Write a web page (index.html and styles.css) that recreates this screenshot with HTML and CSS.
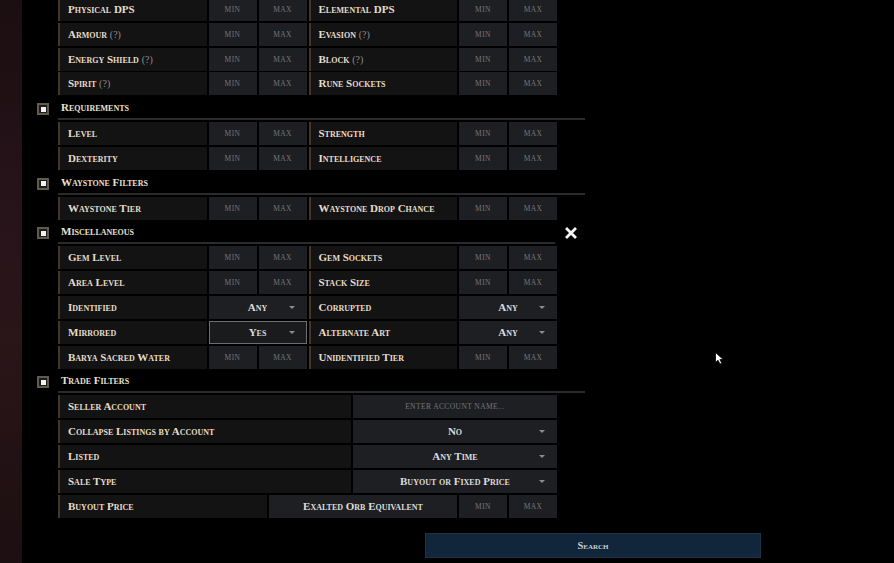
FILE: index.html
```html
<!DOCTYPE html>
<html lang="en">
<head>
  <meta charset="UTF-8">
  <meta name="viewport" content="width=device-width, initial-scale=1.0">
  <title>Trade - Filters</title>
  <link rel="stylesheet" href="styles.css">
</head>
<body>
  <div class="page">

    <!-- Borde rojizo de la izquierda -->
    <div class="side"></div>

    <main class="filters">

      <!-- Equipment filters (the header is scrolled off) -->
      <div class="row pair">
        <div class="label">Physical DPS</div><div class="box">min</div><div class="box">max</div>
        <div class="label">Elemental DPS</div><div class="box">min</div><div class="box">max</div>
      </div>
      <div class="row pair">
        <div class="label">Armour <span class="hint">(?)</span></div><div class="box">min</div><div class="box">max</div>
        <div class="label">Evasion <span class="hint">(?)</span></div><div class="box">min</div><div class="box">max</div>
      </div>
      <div class="row pair">
        <div class="label">Energy Shield <span class="hint">(?)</span></div><div class="box">min</div><div class="box">max</div>
        <div class="label">Block <span class="hint">(?)</span></div><div class="box">min</div><div class="box">max</div>
      </div>
      <div class="row pair">
        <div class="label">Spirit <span class="hint">(?)</span></div><div class="box">min</div><div class="box">max</div>
        <div class="label">Rune Sockets</div><div class="box">min</div><div class="box">max</div>
      </div>

      <!-- Requirements -->
      <div class="head">
        <span class="check"><span></span></span>
        <div class="title">Requirements</div>
      </div>
      <div class="row pair">
        <div class="label">Level</div><div class="box">min</div><div class="box">max</div>
        <div class="label">Strength</div><div class="box">min</div><div class="box">max</div>
      </div>
      <div class="row pair">
        <div class="label">Dexterity</div><div class="box">min</div><div class="box">max</div>
        <div class="label">Intelligence</div><div class="box">min</div><div class="box">max</div>
      </div>

      <!-- Waystone Filters -->
      <div class="head">
        <span class="check"><span></span></span>
        <div class="title">Waystone Filters</div>
      </div>
      <div class="row pair">
        <div class="label">Waystone Tier</div><div class="box">min</div><div class="box">max</div>
        <div class="label">Waystone Drop Chance</div><div class="box">min</div><div class="box">max</div>
      </div>

      <!-- Miscellaneous -->
      <div class="head">
        <span class="check"><span></span></span>
        <div class="title short">Miscellaneous</div>
        <svg class="close" width="12" height="12" viewBox="0 0 12 12">
          <path d="M2 2 L10 10 M10 2 L2 10" stroke="#f4f4f4" stroke-width="2.8" stroke-linecap="square"/>
        </svg>
      </div>
      <div class="row pair">
        <div class="label">Gem Level</div><div class="box">min</div><div class="box">max</div>
        <div class="label">Gem Sockets</div><div class="box">min</div><div class="box">max</div>
      </div>
      <div class="row pair">
        <div class="label">Area Level</div><div class="box">min</div><div class="box">max</div>
        <div class="label">Stack Size</div><div class="box">min</div><div class="box">max</div>
      </div>
      <div class="row pair">
        <div class="label">Identified</div><div class="select wide">Any<i class="caret"></i></div>
        <div class="label">Corrupted</div><div class="select wide">Any<i class="caret"></i></div>
      </div>
      <div class="row pair">
        <div class="label">Mirrored</div><div class="select wide focus">Yes<i class="caret"></i></div>
        <div class="label">Alternate Art</div><div class="select wide">Any<i class="caret"></i></div>
      </div>
      <div class="row pair">
        <div class="label">Barya Sacred Water</div><div class="box">min</div><div class="box">max</div>
        <div class="label">Unidentified Tier</div><div class="box">min</div><div class="box">max</div>
      </div>

      <!-- Trade Filters -->
      <div class="head">
        <span class="check"><span></span></span>
        <div class="title">Trade Filters</div>
      </div>
      <div class="row trade">
        <div class="label">Seller Account</div>
        <div class="box">Enter account name...</div>
      </div>
      <div class="row trade">
        <div class="label">Collapse Listings by Account</div>
        <div class="select">No<i class="caret"></i></div>
      </div>
      <div class="row trade">
        <div class="label">Listed</div>
        <div class="select">Any Time<i class="caret"></i></div>
      </div>
      <div class="row trade">
        <div class="label">Sale Type</div>
        <div class="select">Buyout or Fixed Price<i class="caret"></i></div>
      </div>
      <div class="row price">
        <div class="label">Buyout Price</div>
        <div class="select">Exalted Orb Equivalent</div>
        <div class="box">min</div>
        <div class="box">max</div>
      </div>

      <button class="search">Search</button>
    </main>

    <!-- Puntero del ratón -->
    <svg class="cursor" width="10" height="13" viewBox="0 0 10 13">
      <path d="M0.5 0.5 L0.5 10.5 L3 8.2 L5 12 L6.8 11.2 L4.9 7.5 L8.2 7.5 Z" fill="#fff" stroke="#000" stroke-width="0.8"/>
    </svg>
  </div>
</body>
</html>
```

FILE: styles.css
```css
/* Estilos generales */
html, body {
  margin: 0;
  padding: 0;
  height: 100%;
  overflow: hidden;
  background: #000;
  font-family: "Liberation Serif", "DejaVu Serif", serif;
}

.page {
  display: flex;
  height: 563px;
  position: relative;
}

/* Franja rojiza de la izquierda */
.side {
  width: 22px;
  flex: none;
  background: linear-gradient(to bottom, #1b0e10 0%, #26131a 35%, #2a1519 60%, #1c0f11 100%);
}

/* Columna de filtros */
.filters {
  margin-left: 36px;
  margin-top: -2.2px; /* la pagina esta desplazada un poco */
  width: 499px;
  flex: none;
  display: flex;
  flex-direction: column;
  gap: 1.85px;
}

.row {
  height: 23px;
  display: grid;
  gap: 2px;
}

.row.pair {
  grid-template-columns: 1fr 48px 48px 1fr 48px 48px;
}

.row.trade {
  grid-template-columns: 1fr 204px;
}

.row.price {
  grid-template-columns: 1fr 188px 48px 48px;
}

/* Etiqueta de cada filtro */
.label {
  background: #131313;
  border-left: 2px solid #44372a;
  padding-left: 8px;
  line-height: 23px;
  font-size: 11px;
  font-weight: bold;
  font-variant: small-caps;
  color: #e6ddca;
  white-space: nowrap;
  overflow: hidden;
}

.hint {
  font-weight: normal;
  font-variant: normal;
  color: #8e8e8e;
  font-size: 10px;
}

/* Cajas min / max */
.box {
  background: #1e1f22;
  color: #75767a;
  font-size: 7.5px;
  letter-spacing: 0.4px;
  text-transform: uppercase;
  text-align: center;
  line-height: 23px;
}

/* Desplegables */
.select {
  position: relative;
  background: #1e1f22;
  color: #dcdcdc;
  font-size: 11px;
  font-weight: bold;
  font-variant: small-caps;
  text-align: center;
  line-height: 23px;
  white-space: nowrap;
}

.select.wide {
  grid-column: span 2;
}

.select.focus {
  background: #1a1b1d;
  box-shadow: inset 0 0 0 1px #6d6e71;
}

.caret {
  position: absolute;
  right: 12px;
  top: 10px;
  width: 0;
  height: 0;
  border-left: 3px solid transparent;
  border-right: 3px solid transparent;
  border-top: 3px solid #8c8c8c;
}

/* Cabecera de cada seccion */
.head {
  height: 23px;
  display: flex;
  align-items: flex-start;
  margin-left: -21px;
}

.check {
  flex: none;
  width: 12px;
  height: 12px;
  box-sizing: border-box;
  border: 2px solid #625a4a;
  background: #1c1c1c;
  margin-top: 6px;
  margin-right: 9px;
  display: flex;
  align-items: center;
  justify-content: center;
}

.check span {
  width: 5px;
  height: 5px;
  background: #f2f2f2;
}

.title {
  flex: none;
  width: 527px;
  height: 23px;
  box-sizing: border-box;
  border-bottom: 2px solid #2b2b2b;
  padding-left: 3px;
  line-height: 21px;
  font-size: 11px;
  font-weight: bold;
  font-variant: small-caps;
  color: #e6e0d2;
}

.title.short {
  width: 497px;
}

.close {
  flex: none;
  margin-left: 10px;
  margin-top: 6px;
}

/* Boton de busqueda */
.search {
  margin-top: 13px;
  margin-left: 367px;
  width: 336px;
  height: 25px;
  background: #11253b;
  border: 1px solid #1c3249;
  color: #c9cdd3;
  font-family: "Liberation Serif", "DejaVu Serif", serif;
  font-size: 10.5px;
  font-weight: bold;
  font-variant: small-caps;
  padding: 0;
  cursor: pointer;
}

/* Puntero */
.cursor {
  position: absolute;
  left: 715px;
  top: 352px;
}
```
